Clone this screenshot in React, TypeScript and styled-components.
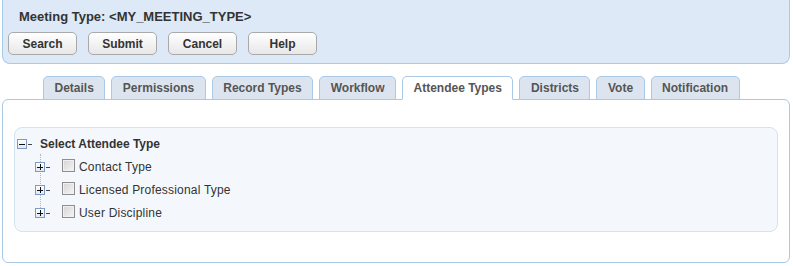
import styled, { createGlobalStyle } from 'styled-components';

const GlobalStyle = createGlobalStyle`
  body {
    margin: 0;
    background: #fff;
    font-family: "Liberation Sans", Arial, sans-serif;
    font-size: 12px;
    color: #333;
  }
`;

const tabs = [
  'Details',
  'Permissions',
  'Record Types',
  'Workflow',
  'Attendee Types',
  'Districts',
  'Vote',
  'Notification',
];

const attendeeTypes = ['Contact Type', 'Licensed Professional Type', 'User Discipline'];

const Expander = ({ open }: { open?: boolean }) => (
  <svg width="16" height="10" viewBox="0 0 16 10">
    <defs>
      <linearGradient id="exp-bg" x1="0" y1="0" x2="0" y2="1">
        <stop offset="0" stopColor="#ffffff" />
        <stop offset="1" stopColor="#dfe7f2" />
      </linearGradient>
    </defs>
    <rect x="0.5" y="0.5" width="9" height="9" fill="url(#exp-bg)" stroke="#7d9bc6" />
    <line x1="2" y1="5" x2="8" y2="5" stroke="#111" strokeWidth="1" shapeRendering="crispEdges" />
    {!open && (
      <line x1="5" y1="2" x2="5" y2="8" stroke="#111" strokeWidth="1" shapeRendering="crispEdges" />
    )}
    <line x1="11" y1="5" x2="15" y2="5" stroke="#444" strokeWidth="1" shapeRendering="crispEdges" />
  </svg>
);

const App = () => {
  return (
    <Page>
      <GlobalStyle />
      <Header>
        <Title>Meeting Type: &lt;MY_MEETING_TYPE&gt;</Title>
        <ButtonRow>
          <Button>Search</Button>
          <Button>Submit</Button>
          <Button>Cancel</Button>
          <Button>Help</Button>
        </ButtonRow>
      </Header>

      <TabBar>
        {tabs.map((tab) => (
          <Tab key={tab} $active={tab === 'Attendee Types'}>
            {tab}
          </Tab>
        ))}
      </TabBar>

      <Panel>
        <TreeBox>
          <RootRow>
            <Expander open />
            <RootLabel>Select Attendee Type</RootLabel>
          </RootRow>
          <ChildList>
            {attendeeTypes.map((item) => (
              <ChildRow key={item}>
                <Expander />
                <Check type="checkbox" />
                <ChildLabel>{item}</ChildLabel>
              </ChildRow>
            ))}
          </ChildList>
        </TreeBox>
      </Panel>
    </Page>
  );
};

const Page = styled.div`
  padding: 0 3px 0 2px;
`;

const Header = styled.div`
  background-color: #dde9f6;
  border: 1px solid #a9cbea;
  border-top: none;
  border-radius: 0 0 8px 8px;
  padding: 8px 6px 8px 5px;
`;

const Title = styled.div`
  font-weight: 700;
  font-size: 13px;
  line-height: 18px;
  color: #333;
  margin-left: 11px;
`;

const ButtonRow = styled.div`
  display: flex;
  gap: 11px;
  margin-top: 6px;
`;

const Button = styled.button`
  width: 69px;
  height: 23px;
  padding: 0;
  font-family: "Liberation Sans", Arial, sans-serif;
  font-size: 12px;
  font-weight: 700;
  color: #333;
  background: linear-gradient(#ffffff, #e7e7e7);
  border: 1px solid #a9a9a9;
  border-radius: 5px;
`;

const TabBar = styled.div`
  display: flex;
  gap: 6px;
  margin: 12px 0 0 41px;
  position: relative;
  z-index: 1;
`;

const Tab = styled.div<{ $active?: boolean }>`
  height: 22px;
  line-height: 22px;
  padding: 0 10.5px;
  font-size: 12px;
  font-weight: 700;
  color: #555;
  background-color: ${(p) => (p.$active ? '#fff' : '#dce5ef')};
  border: 1px solid #a9c9e6;
  border-bottom-color: ${(p) => (p.$active ? '#fff' : '#a9c9e6')};
  border-radius: 5px 5px 0 0;
  margin-bottom: -1px;
`;

const Panel = styled.div`
  background: #fff;
  border: 1px solid #a9c9e6;
  border-radius: 6px;
  padding: 27px 11px 30px 11px;
`;

const TreeBox = styled.div`
  background-color: #f4f8fc;
  border: 1px solid #d3e3f2;
  border-radius: 8px;
  padding: 4px 0 7px 2px;
`;

const RootRow = styled.div`
  display: flex;
  align-items: center;
  height: 23px;
`;

const RootLabel = styled.span`
  font-weight: 700;
  margin-left: 7px;
  color: #333;
`;

const ChildList = styled.div`
  position: relative;
  margin-left: 18px;

  &::before {
    content: '';
    position: absolute;
    left: 5px;
    top: -1px;
    height: 54px;
    border-left: 1px dotted #b5b5b5;
  }
`;

const ChildRow = styled.div`
  position: relative;
  display: flex;
  align-items: center;
  height: 23px;
`;

const Check = styled.input`
  appearance: none;
  width: 13px;
  height: 13px;
  margin: 0 4px 3px 11px;
  border: 1px solid #8e8e8e;
  background: linear-gradient(135deg, #d4d4d4, #f6f6f6);
  box-shadow: inset 0 0 0 1px #f0f0f0;
`;

const ChildLabel = styled.span`
  color: #333;
  letter-spacing: 0.2px;
`;

export default App;
